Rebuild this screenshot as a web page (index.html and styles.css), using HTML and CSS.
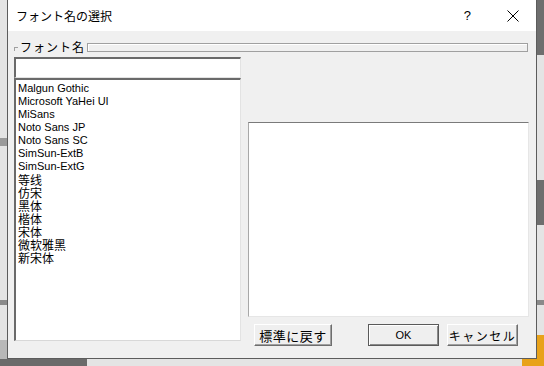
FILE: index.html
```html
<!DOCTYPE html>
<html lang="ja">
<head>
    <meta charset="UTF-8">
    <title>フォント名の選択</title>
    <link rel="stylesheet" href="styles.css">
</head>
<body>
    <div class="desk-bit left-a"></div>
    <div class="desk-bit left-b"></div>
    <div class="desk-bit left-c"></div>
    <div class="desk-bit right-a"></div>
    <div class="desk-bit right-b"></div>
    <div class="desk-bit right-c"></div>
    <div class="desk-bit bottom-a"></div>
    <div class="desk-bit orange"></div>

    <div class="dialog">
        <div class="titlebar">
            <span class="title">フォント名の選択</span>
            <span class="help">?</span>
            <span class="close">
                <svg width="12" height="12" viewBox="0 0 12 12"><path d="M0.5 0.5 L11.5 11.5 M11.5 0.5 L0.5 11.5" stroke="#000" stroke-width="1" fill="none"/></svg>
            </span>
        </div>
        <div class="content">
            <div class="group-head">
                <span class="corner"></span>
                <span class="group-label">フォント名</span>
                <span class="group-bar"></span>
            </div>
            <div class="columns">
                <div class="left-col">
                    <div class="name-input"></div>
                    <ul class="font-list">
                        <li>Malgun Gothic</li>
                        <li>Microsoft YaHei UI</li>
                        <li>MiSans</li>
                        <li>Noto Sans JP</li>
                        <li>Noto Sans SC</li>
                        <li>SimSun-ExtB</li>
                        <li>SimSun-ExtG</li>
                        <li class="cjk">等线</li>
                        <li class="cjk">仿宋</li>
                        <li class="cjk">黑体</li>
                        <li class="cjk">楷体</li>
                        <li class="cjk">宋体</li>
                        <li class="cjk">微软雅黑</li>
                        <li class="cjk">新宋体</li>
                    </ul>
                </div>
                <div class="right-col">
                    <div class="preview"></div>
                    <div class="buttons">
                        <button class="btn reset">標準に戻す</button>
                        <button class="btn ok">OK</button>
                        <button class="btn cancel">キャンセル</button>
                    </div>
                </div>
            </div>
        </div>
    </div>
</body>
</html>
```

FILE: styles.css
```css
body {
    margin: 0;
    padding: 0;
    width: 544px;
    height: 366px;
    overflow: hidden;
    background-color: #e4e4e4;
    position: relative;
    font-family: "Noto Sans CJK JP", sans-serif;
}

/* desktop behind the dialog */
.desk-bit {
    position: absolute;
}

.left-a { left: 0; top: 138px; width: 7px; height: 8px; background: #9a9a9a; }
.left-b { left: 0; top: 300px; width: 7px; height: 5px; background: #8a8a8a; }
.left-c { left: 0; top: 340px; width: 7px; height: 26px; background: #b8b8b8; }
.right-a { left: 537px; top: 0; width: 7px; height: 55px; background: #6e6e6e; }
.right-b { left: 537px; top: 180px; width: 7px; height: 45px; background: #6e6e6e; }
.right-c { left: 537px; top: 300px; width: 7px; height: 5px; background: #8a8a8a; }
.bottom-a { left: 0; top: 359px; width: 87px; height: 7px; background: #6a6a6a; }
.orange { left: 522px; top: 335px; width: 22px; height: 31px; background: #e8a21a; }

.dialog {
    position: relative;
    margin-left: 7px;
    width: 528px;
    height: 358px;
    border: 1px solid #5c5c5c;
    border-top: none;
    background-color: #f0f0f0;
}

.titlebar {
    height: 31px;
    background-color: #ffffff;
    display: flex;
    align-items: center;
    font-size: 12px;
    color: #000;
}

.title {
    margin-left: 8px;
    flex: 1;
}

.help {
    font-family: "Liberation Sans", sans-serif;
    font-size: 13px;
    margin-right: 36px;
}

.close {
    display: flex;
    margin-right: 17px;
}

.content {
    padding: 9px 7px 0 6px;
}

.group-head {
    display: flex;
    align-items: flex-start;
    height: 13px;
}

.corner {
    width: 3px;
    height: 3px;
    margin-top: 7px;
    border-top: 1px solid #a0a0a0;
    border-left: 1px solid #a0a0a0;
}

.group-label {
    font-size: 12px;
    line-height: 13px;
    letter-spacing: 1px;
    padding: 0 2px 0 2px;
    color: #000;
}

.group-bar {
    flex: 1;
    height: 7px;
    margin-top: 3px;
    margin-right: 1px;
    border: 1px solid #a0a0a0;
    box-shadow: inset 1px 1px 0 #ffffff;
}

.columns {
    display: flex;
    gap: 7px;
    margin-top: 4px;
}

.left-col {
    width: 227px;
    display: flex;
    flex-direction: column;
}

.name-input {
    height: 18px;
    background: #ffffff;
    border-top: 2px solid #6a6a6a;
    border-left: 2px solid #6a6a6a;
    border-right: 1px solid #e3e3e3;
    border-bottom: 1px solid #e3e3e3;
}

.font-list {
    list-style: none;
    margin: 0;
    padding: 2px 0 0 2px;
    height: 258px;
    background: #ffffff;
    border-top: 2px solid #6a6a6a;
    border-left: 2px solid #6a6a6a;
    border-right: 1px solid #e3e3e3;
    border-bottom: 1px solid #d8d8d8;
    font-family: "Liberation Sans", sans-serif;
    font-size: 11px;
    line-height: 13px;
    color: #000;
}

.font-list .cjk {
    font-family: "Noto Sans CJK SC", sans-serif;
    font-size: 12px;
}

.right-col {
    width: 281px;
    padding-top: 65px;
}

.preview {
    height: 193px;
    background: #ffffff;
    border-top: 1px solid #7a7a7a;
    border-left: 1px solid #a8a8a8;
    border-right: 1px solid #e6e6e6;
    border-bottom: 1px solid #e6e6e6;
}

.buttons {
    display: flex;
    margin-top: 7px;
    padding-left: 6px;
}

.btn {
    height: 22px;
    padding: 0;
    font-family: "Noto Sans CJK JP", sans-serif;
    font-size: 12px;
    color: #000;
    background-color: #efefef;
    border-top: 1px solid #ffffff;
    border-left: 1px solid #ffffff;
    border-right: 1px solid #6e6e6e;
    border-bottom: 1px solid #6e6e6e;
    box-shadow: inset -1px -1px 0 #a0a0a0;
    cursor: pointer;
}

.reset {
    width: 78px;
    font-size: 13px;
    letter-spacing: 0.5px;
}

.ok {
    width: 71px;
    margin-left: 36px;
    font-family: "Liberation Sans", sans-serif;
    font-size: 11px;
    border: 1px solid #5a5a5a;
    box-shadow: inset 1px 1px 0 #ffffff, inset -1px -1px 0 #8a8a8a;
}

.cancel {
    width: 71px;
    margin-left: 8px;
    letter-spacing: 1.5px;
}
```
